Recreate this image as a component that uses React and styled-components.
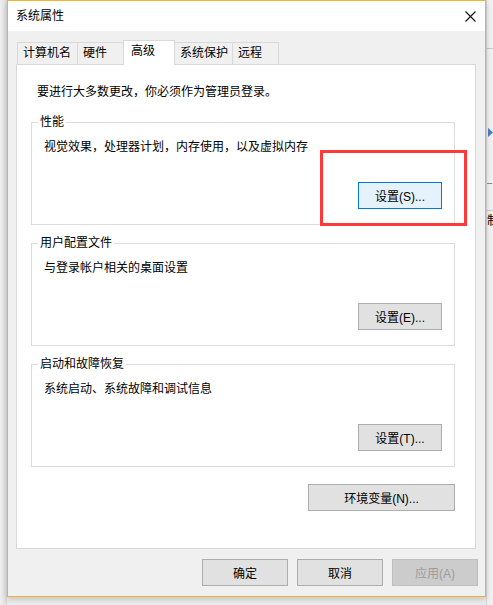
import React from 'react'
import styled, { createGlobalStyle } from 'styled-components'

const GlobalStyle = createGlobalStyle`
	body {
		margin: 0;
		background: #e8e8e8;
		font-family: "Liberation Sans", "Noto Sans CJK SC", sans-serif;
	}
`

const tabs = [
	{ label: '计算机名', w: 61 },
	{ label: '硬件', w: 47 },
	{ label: '高级', w: 52, active: true },
	{ label: '系统保护', w: 59 },
	{ label: '远程', w: 47 },
]

const groups = [
	{ title: '性能', desc: '视觉效果，处理器计划，内存使用，以及虚拟内存', btn: '设置(S)...', focus: true },
	{ title: '用户配置文件', desc: '与登录帐户相关的桌面设置', btn: '设置(E)...' },
	{ title: '启动和故障恢复', desc: '系统启动、系统故障和调试信息', btn: '设置(T)...' },
]

const App = () => {
	return (
		<Desktop>
			<GlobalStyle />
			<LeftEdge />
			<Window>
				<TitleBar>
					<Title>系统属性</Title>
					<CloseBox>
						<svg width="11" height="11" viewBox="0 0 11 11">
							<path d="M0.5 0.5 L10.5 10.5 M10.5 0.5 L0.5 10.5" stroke="#111" strokeWidth="1.1" fill="none" />
						</svg>
					</CloseBox>
				</TitleBar>
				<Body>
					<TabRow>
						{tabs.map(t => (
							<Tab key={t.label} $w={t.w} $active={t.active}>{t.label}</Tab>
						))}
					</TabRow>
					<Panel>
						<Intro>要进行大多数更改，你必须作为管理员登录。</Intro>
						{groups.map(g => (
							<Group key={g.title}>
								<Legend>{g.title}</Legend>
								<Desc>{g.desc}</Desc>
								<ButtonRow>
									<Button $w={84} $focus={g.focus}>{g.btn}</Button>
								</ButtonRow>
							</Group>
						))}
						<EnvRow>
							<Button $w={147}>环境变量(N)...</Button>
						</EnvRow>
					</Panel>
					<Footer>
						<Button $w={86}>确定</Button>
						<Button $w={86}>取消</Button>
						<Button $w={86} disabled>应用(A)</Button>
					</Footer>
				</Body>
				<Highlight />
			</Window>
			<RightStrip>
				<StripLine $top={48} />
				<Arrow width="5" height="9" viewBox="0 0 5 9">
					<path d="M0 0 L5 4.5 L0 9 Z" fill="#4d7cc9" />
				</Arrow>
				<Tick>_</Tick>
				<StripLine $top={26} />
				<Glyph>制</Glyph>
			</RightStrip>
		</Desktop>
	)
}

const Desktop = styled.div`
	width: 493px;
	height: 605px;
	display: flex;
	overflow: hidden;
	background: #ebebeb;
`
const LeftEdge = styled.div`
	width: 7px;
	flex-shrink: 0;
	background: linear-gradient(to right, #efefef, #e3e3e3 70%, #d6d6d6);
`
const Window = styled.div`
	position: relative;
	z-index: 1;
	width: 479px;
	height: 597px;
	flex-shrink: 0;
	box-sizing: border-box;
	border: 1px solid #f0b429;
	background: #f0f0f0;
	display: flex;
	flex-direction: column;
	box-shadow: 0 2px 6px rgba(0, 0, 0, 0.18);
	font-size: 12px;
	color: #000;
`
const TitleBar = styled.div`
	height: 30px;
	flex-shrink: 0;
	background: #fff;
	display: flex;
	align-items: center;
	justify-content: space-between;
	padding-left: 8px;
`
const Title = styled.span`
	font-size: 12px;
	line-height: 16px;
`
const CloseBox = styled.div`
	width: 30px;
	height: 30px;
	display: flex;
	align-items: center;
	justify-content: center;
`
const Body = styled.div`
	flex: 1;
	min-height: 0;
	display: flex;
	flex-direction: column;
	padding: 9px 9px 10px 8px;
`
const TabRow = styled.div`
	display: flex;
	align-items: flex-end;
	height: 24px;
	flex-shrink: 0;
	padding-left: 1px;
`
const Tab = styled.div`
	position: relative;
	box-sizing: border-box;
	width: ${p => p.$w}px;
	height: ${p => (p.$active ? 25 : 22)}px;
	margin-bottom: ${p => (p.$active ? -1 : 0)}px;
	z-index: ${p => (p.$active ? 1 : 0)};
	border: 1px solid #d9d9d9;
	border-bottom: none;
	background: ${p => (p.$active ? '#fff' : '#f0f0f0')};
	padding-left: ${p => (p.$active ? 7 : 5)}px;
	line-height: 21px;
	white-space: nowrap;
	& + & {
		margin-left: -1px;
	}
`
const Panel = styled.div`
	flex: 1;
	min-height: 0;
	box-sizing: border-box;
	background: #fff;
	border: 1px solid #d9d9d9;
	padding: 0 20px 0 14px;
	display: flex;
	flex-direction: column;
`
const Intro = styled.div`
	margin: 19px 0 0 6px;
	line-height: 16px;
`
const Group = styled.fieldset`
	margin: 10px 0 0;
	min-inline-size: 0;
	border: 1px solid #dcdcdc;
	padding: 0 12px 15px;

	&:first-of-type {
		margin-top: 14px;
	}
`
const Legend = styled.legend`
	margin-left: -6px;
	padding: 0 2px;
	line-height: 16px;
`
const Desc = styled.div`
	margin-top: 9px;
	line-height: 16px;
`
const ButtonRow = styled.div`
	display: flex;
	justify-content: flex-end;
	margin-top: 27px;
`
const EnvRow = styled.div`
	display: flex;
	justify-content: flex-end;
	margin-top: 17px;
`
const Button = styled.button`
	box-sizing: border-box;
	width: ${p => p.$w}px;
	height: 27px;
	padding: 0;
	font-family: inherit;
	font-size: 12px;
	color: #000;
	background: ${p => (p.$focus ? '#e5f1fb' : '#e1e1e1')};
	border: 1px solid ${p => (p.$focus ? '#0078d7' : '#adadad')};

	&:disabled {
		background: #cccccc;
		border-color: #bfbfbf;
		color: #9d9d9d;
	}
`
const Footer = styled.div`
	display: flex;
	flex-shrink: 0;
	justify-content: flex-end;
	gap: 9px;
	margin: 10px -2px 0 0;
`
const Highlight = styled.div`
	position: absolute;
	left: 312px;
	top: 149px;
	width: 147px;
	height: 76px;
	box-sizing: border-box;
	border: 3px solid #ff3838;
	pointer-events: none;
`
const RightStrip = styled.div`
	width: 7px;
	flex-shrink: 0;
	display: flex;
	flex-direction: column;
	background: #f0f0f0;
	border-left: 1px solid #d4d4d4;
	overflow: hidden;
`
const StripLine = styled.div`
	height: 1px;
	flex-shrink: 0;
	margin-top: ${p => p.$top}px;
	background: #c9c9c9;
`
const Arrow = styled.svg`
	margin: 79px 0 0 1px;
	flex-shrink: 0;
`
const Tick = styled.div`
	margin-top: 38px;
	font-size: 9px;
	line-height: 9px;
	color: #555;
`
const Glyph = styled.div`
	margin: 2px 0 0 0;
	font-size: 12px;
	line-height: 16px;
	white-space: nowrap;
`

export default App
